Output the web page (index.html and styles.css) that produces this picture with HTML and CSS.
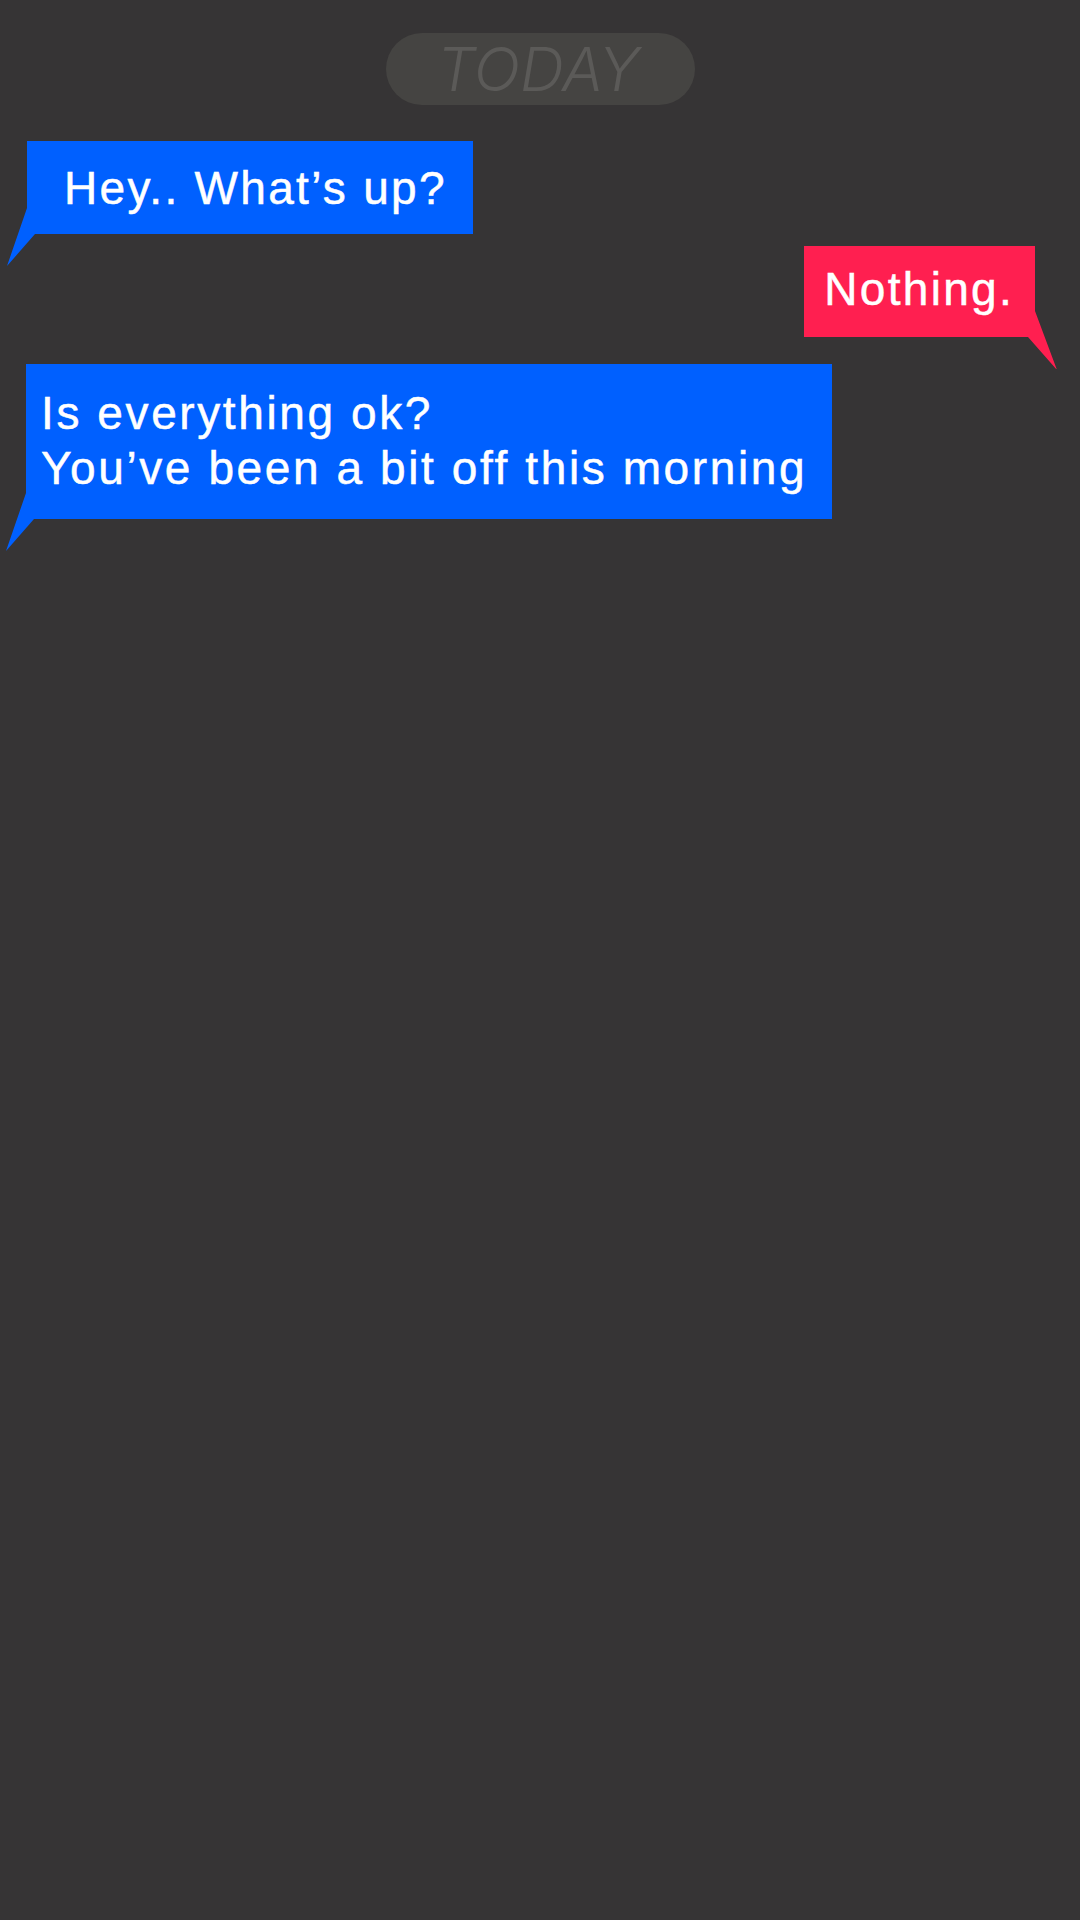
FILE: index.html
```html
<!DOCTYPE html>
<html lang="en">
<head>
<meta charset="utf-8">
<title>Chat</title>
<link rel="stylesheet" href="styles.css">
</head>
<body>
<main class="chat">
  <div class="day"><span class="day-label">TODAY</span></div>
  <div class="msg msg-in msg-hey">&nbsp;Hey.. What’s up?</div>
  <div class="msg msg-out msg-nothing">Nothing.</div>
  <div class="msg msg-in msg-ok">Is everything ok?<br>You’ve been a bit off this morning</div>
</main>
</body>
</html>
```
FILE: styles.css
```css
html, body {
  margin: 0;
  padding: 0;
}
body {
  background: #363435;
  width: 1080px;
  height: 1920px;
  overflow: hidden;
}
.chat {
  display: flex;
  flex-direction: column;
  padding-top: 33px;
}
.day {
  align-self: center;
  width: 309px;
  height: 72px;
  border-radius: 36px;
  background: #454442;
  display: flex;
  align-items: center;
  justify-content: center;
}
.day-label {
  font-family: Inter, "Liberation Sans", sans-serif;
  font-weight: 300;
  font-style: italic;
  font-size: 61px;
  line-height: 72px;
  color: #5b5a58;
  margin-left: -4px;
}
.msg {
  position: relative;
  font-family: "Liberation Sans", Arial, sans-serif;
  font-size: 46px;
  line-height: 55px;
  letter-spacing: 2.3px;
  -webkit-text-stroke: 0.5px #ffffff;
  color: #ffffff;
  white-space: nowrap;
}
.msg::after {
  content: "";
  position: absolute;
  bottom: -32px;
  width: 28px;
  height: 58px;
  background: inherit;
}
.msg-in {
  align-self: flex-start;
  margin-left: 27px;
  background: #0060ff;
}
.msg-in::after {
  left: -20px;
  clip-path: polygon(20px 0, 0 58px, 28px 26px, 20px 26px);
}
.msg-out {
  align-self: flex-end;
  margin-right: 45px;
  background: #ff1f50;
}
.msg-out::after {
  right: -22px;
  width: 29px;
  clip-path: polygon(7px 0, 29px 59px, 0 26px, 7px 26px);
}
.msg-hey {
  margin-top: 36px;
  padding: 20px 26px 18px 22px;
}
.msg-nothing {
  margin-top: 12px;
  padding: 16px 21px 20px 20px;
}
.msg-ok {
  margin-top: 27px;
  margin-left: 26px;
  padding: 22px 25px 23px 15px;
  letter-spacing: 2.6px;
}
```
